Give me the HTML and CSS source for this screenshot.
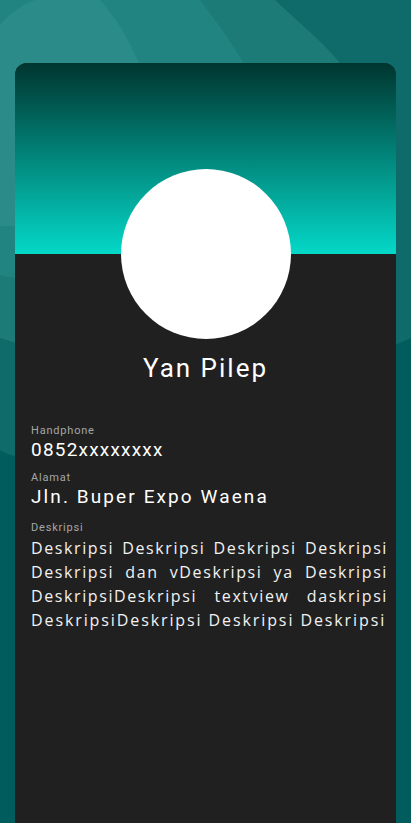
FILE: index.html
```html
<!DOCTYPE html>
<html lang="id">
<head>
<meta charset="utf-8">
<title>Profil</title>
<link rel="stylesheet" href="styles.css">
</head>
<body>
<div class="screen">
  <svg class="backdrop" width="411" height="823" viewBox="0 0 411 823" aria-hidden="true">
    <rect width="411" height="823" fill="#015d5d"/>
    <path d="M0,0 H411 V338 C330,374 60,490 0,450 Z" fill="#0e6b6a"/>
    <path d="M0,0 H275 C305,28 330,48 345,70 C380,140 360,230 260,290 C170,340 60,360 0,338 Z" fill="#1c7a77"/>
    <path d="M0,0 H200 C215,20 232,42 245,66 C270,130 250,200 200,235 C140,270 60,290 0,275 Z" fill="#228480"/>
    <path d="M0,25 C10,13 22,5 35,0 H100 C118,20 130,42 140,66 C150,120 120,200 70,226 H0 Z" fill="#2b8b89"/>
  </svg>
  <main class="card">
    <div class="card-header"></div>
    <div class="avatar"></div>
    <h1 class="name">Yan Pilep</h1>
    <section class="info">
      <div class="field">
        <div class="label">Handphone</div>
        <div class="value value-phone">0852xxxxxxxx</div>
      </div>
      <div class="field">
        <div class="label">Alamat</div>
        <div class="value value-address">Jln. Buper Expo Waena</div>
      </div>
      <div class="field field-desc">
        <div class="label">Deskripsi</div>
        <p class="desc"><span class="desc-line">Deskripsi Deskripsi Deskripsi Deskripsi</span> <span class="desc-line">Deskripsi dan vDeskripsi ya Deskripsi</span> <span class="desc-line">DeskripsiDeskripsi textview daskripsi</span> <span class="desc-line desc-last">DeskripsiDeskripsi Deskripsi Deskripsi</span></p>
      </div>
    </section>
  </main>
</div>
</body>
</html>
```

FILE: styles.css
```css
* { box-sizing: border-box; }

html, body {
  margin: 0;
  padding: 0;
  height: 823px;
  overflow: hidden;
  background: #015d5d;
}

.screen {
  position: relative;
  width: 411px;
  height: 823px;
  padding: 63px 15px 0 15px;
  display: flex;
  flex-direction: column;
}

.backdrop {
  position: absolute;
  left: 0;
  top: 0;
  z-index: 0;
  display: block;
}

.card {
  position: relative;
  z-index: 1;
  flex: 1;
  background: #202020;
  border-radius: 12px 12px 0 0;
  overflow: hidden;
  display: flex;
  flex-direction: column;
}

.card-header {
  height: 191px;
  background: linear-gradient(to bottom, #00352f 0%, #04d8c8 100%);
  flex: none;
}

.avatar {
  width: 170px;
  height: 170px;
  border-radius: 50%;
  background: #ffffff;
  margin: -85px auto 0 auto;
  flex: none;
}

.name {
  margin: 14px 0 0 0;
  text-align: center;
  font-family: Roboto, "Liberation Sans", sans-serif;
  font-weight: 400;
  font-size: 26px;
  line-height: 30px;
  letter-spacing: 2px;
  color: #ffffff;
}

.info {
  padding: 41px 8px 0 16px;
  display: flex;
  flex-direction: column;
  gap: 10px;
}

.field {
  display: flex;
  flex-direction: column;
  gap: 1px;
}

.field-desc {
  margin-top: 3px;
}

.label {
  font-family: Roboto, "Liberation Sans", sans-serif;
  font-size: 11px;
  line-height: 14px;
  letter-spacing: 0.8px;
  color: #a6a6a6;
}

.value {
  font-family: Roboto, "Liberation Sans", sans-serif;
  font-size: 19px;
  line-height: 22px;
  color: #ffffff;
}

.value-phone { letter-spacing: 1.2px; }
.value-address { letter-spacing: 2.1px; }

.desc {
  margin: 0;
  font-family: "Open Sans", "Noto Sans", sans-serif;
  font-size: 16px;
  line-height: 24px;
  letter-spacing: 1.6px;
  color: #f2f2f2;
}

.desc-line {
  display: block;
  text-align: justify;
  text-align-last: justify;
}

.desc-last {
  text-align: left;
  text-align-last: left;
  letter-spacing: 1.9px;
}
```
